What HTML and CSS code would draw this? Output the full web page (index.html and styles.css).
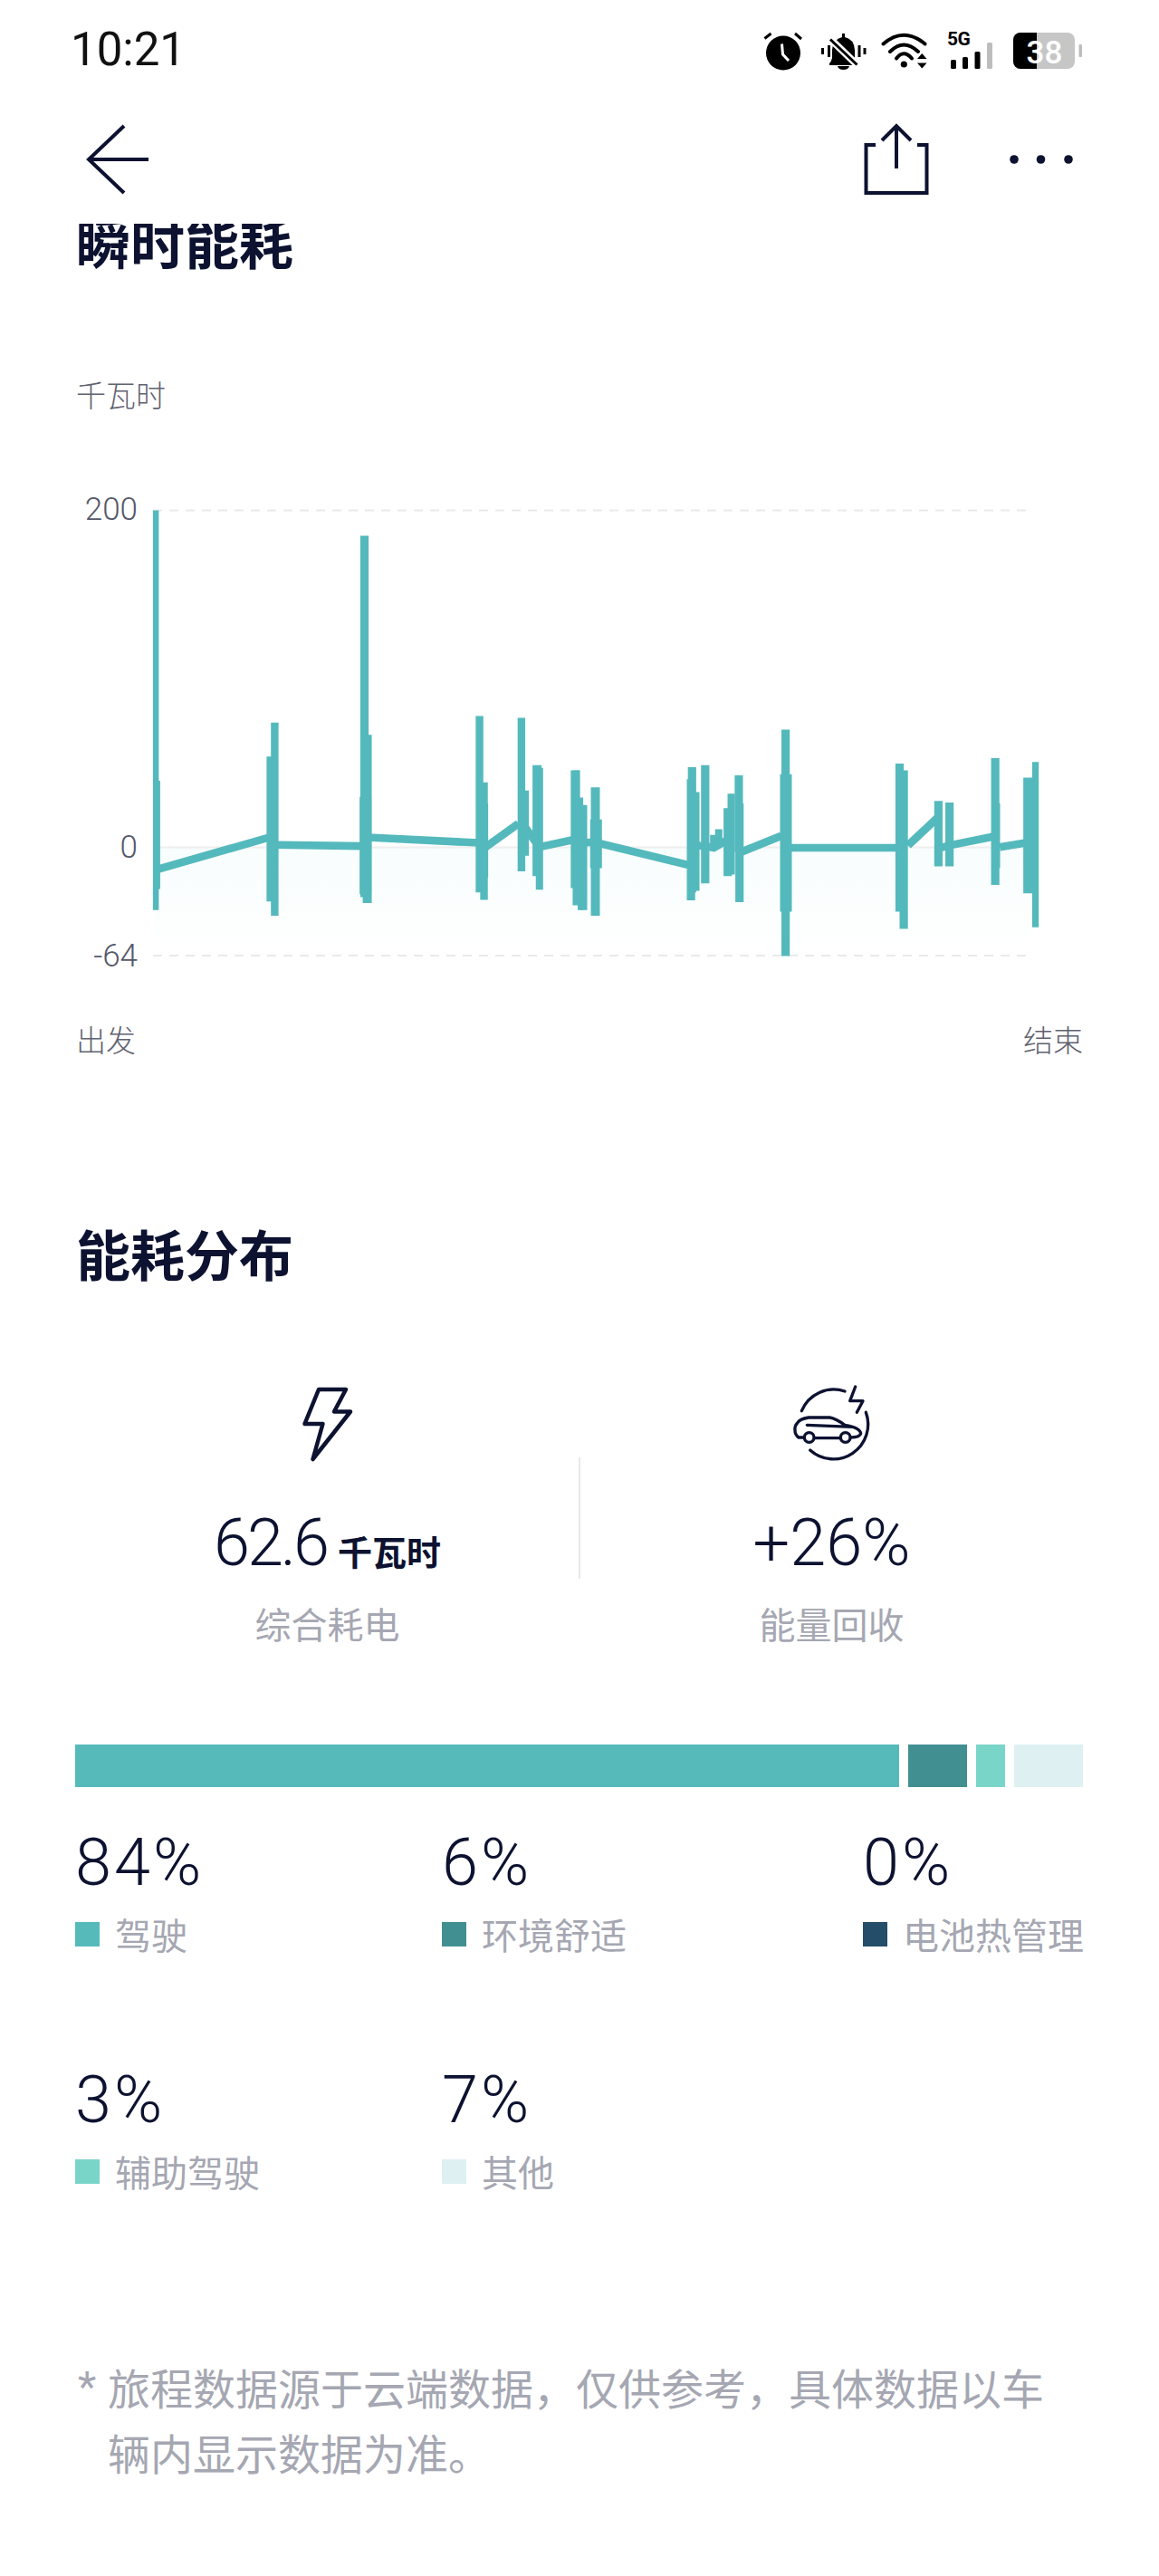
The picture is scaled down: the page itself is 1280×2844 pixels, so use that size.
FILE: index.html
```html
<!DOCTYPE html>
<html lang="zh-CN">
<head>
<meta charset="utf-8">
<title>瞬时能耗</title>
<link rel="stylesheet" href="styles.css">
</head>
<body>
<div class="page">
  <header class="top">
    <div class="status">
      <span class="clock">10:21</span>
      <div class="status-icons">
        <svg class="si" width="60" height="60" viewBox="840 25 60 60">
          <circle class="ink" cx="865" cy="58.5" r="19"/>
          <path class="s-ink" d="M844.5 42.5L851.5 37M878 37L885 43"/>
          <path class="s-white" d="M863.5 48.5L864.5 60L871 67"/>
        </svg>
        <svg class="si" width="65" height="60" viewBox="900 25 65 60">
          <path class="ink" d="M930 37h3v4q10 2 11 14v9q1 4 3 6v2h-31v-2q2-2 3-6v-9q1-12 11-14z"/>
          <path class="ink" d="M925 73h13q-1 4-6.500 4t-6.500-4z"/>
          <path class="s-white-w" d="M916 42L948 73"/>
          <path class="s-ink" d="M917 43.500L946.500 71.500"/>
          <path class="s-ink" d="M908.500 53V60M915.500 50V63M949 50V63M955 53V60"/>
        </svg>
        <svg class="si" width="70" height="60" viewBox="965 25 70 60">
          <path class="s-wifi" d="M975.500 48.500Q998 29 1021.500 48.500M983 57Q998 42 1014 57M990 64.500Q998 54 1007 64.500"/>
          <circle class="ink" cx="998.300" cy="71" r="3.600"/>
          <path class="ink" d="M1018.300 59L1023.500 65H1013zM1013 69.500H1023.500L1018.300 75.500z"/>
        </svg>
        <svg class="si" width="75" height="60" viewBox="1035 25 75 60">
          <text class="fiveg" x="1046" y="50">5G</text>
          <rect class="ink" x="1050" y="66" width="6" height="10" rx="1.500"/>
          <rect class="ink" x="1063" y="63" width="6" height="13" rx="1.500"/>
          <rect class="ink" x="1076.500" y="57" width="6" height="19" rx="1.500"/>
          <rect class="sig-off" x="1090" y="47" width="6" height="29" rx="1.500"/>
        </svg>
        <svg class="si" width="90" height="60" viewBox="1110 25 90 60">
          <rect class="bat-off" x="1119" y="36" width="68" height="40" rx="8"/>
          <path class="ink" d="M1145 36H1127a8 8 0 0 0-8 8V68a8 8 0 0 0 8 8H1145z"/>
          <rect class="sig-off" x="1191.500" y="49" width="3.500" height="14" rx="1"/>
          <text class="batnum" x="1153.500" y="70">38</text>
        </svg>
      </div>
    </div>
    <nav class="nav">
      <svg class="nav-back" width="90" height="90" viewBox="85 131 90 90">
        <path class="s-nav" d="M137 139L98 176L137 213M98 176H164"/>
      </svg>
      <div class="nav-right">
        <svg class="nav-share" width="90" height="90" viewBox="945 131 90 90">
          <path class="s-nav" d="M967 160H956.500V213H1023.500V160H1013M990 186V140M974 155L990 139L1006 155"/>
        </svg>
        <svg class="nav-more" width="90" height="90" viewBox="1105 131 90 90">
          <circle class="ink-nav" cx="1120" cy="176" r="4.800"/>
          <circle class="ink-nav" cx="1149.500" cy="176" r="4.800"/>
          <circle class="ink-nav" cx="1180" cy="176" r="4.800"/>
        </svg>
      </div>
    </nav>
  </header>

  <h1 class="title title-first">瞬时能耗</h1>
  <div class="unit">千瓦时</div>

  <svg class="chart" width="1280" height="610" viewBox="0 500 1280 610">
    <defs>
      <linearGradient id="areaFade" x1="0" y1="0" x2="0" y2="1">
        <stop offset="0" stop-color="#f8fdfd"/>
        <stop offset="1" stop-color="#ffffff"/>
      </linearGradient>
    </defs>
    <rect x="170" y="936" width="968" height="119" fill="url(#areaFade)"/>
    <path class="grid" d="M169 563.500H1138M169 1055H1138"/>
    <path class="zero" d="M169 935.500H1138"/>
    <text class="axis" x="152" y="574">200</text>
    <text class="axis" x="152" y="947">0</text>
    <text class="axis" x="152" y="1067">-64</text>
    <g transform="translate(60 530) scale(.3827 .357)">
      <path class="ln" d="M295 1205L620 1105M640 1128L890 1132M905 1105L1225 1122M1245 1135L1340 1062M1350 1062L1400 1135M1400 1135L1530 1105"/>
      <path class="w8" d="M300 930V1265M291 1010V1265"/>
      <path class="w13" d="M293 94V1330"/>
      <path class="w14" d="M622 855V1303M1360 960V1162"/>
      <path class="w17" d="M636 750V1347M1227 730V1275M1240 935V1298M1348 735V1210"/>
      <path class="w18" d="M895 172V1290"/>
      <path class="w20" d="M628 1000V1250M903 788V1308M1393 882V1225"/>
      <path class="w16" d="M1400 890V1267"/>
      <path class="w26" d="M898 980V1280M1235 1000V1230"/>
    </g>
    <g transform="translate(620 530) scale(.3827 .357)">
      <path class="ln" d="M60 1122L98 1120M105 1122L365 1190M395 1130L430 1135L440 1137L475 1115M520 1150L635 1100M660 1137L970 1137M1000 1130L1085 1045M1095 1137L1120 1130L1245 1103M1265 1135L1340 1122"/>
      <path class="w12" d="M55 982V1330M437 1097V1140M1258 1000V1200"/>
      <path class="w14" d="M1368 872V1383"/>
      <path class="w16" d="M43 898V1315M64 1005V1330M388 965V1270M454 1080V1130M490 970V1220"/>
      <path class="w18" d="M377 888V1275M374 925V1300M415 882V1247M480 1015V1225M512 913V1150M514 1000V1305M647 772V1472M976 877V1335M988 898V1388M1088 992V1195M1120 997V1195M1252 860V1252"/>
      <path class="w20" d="M40 898V1262M98 950V1347"/>
      <path class="w26" d="M100 1050V1200M648 910V1335M1350 920V1278"/>
    </g>
  </svg>

  <div class="axis-x"><span>出发</span><span>结束</span></div>

  <h2 class="title title-second">能耗分布</h2>

  <section class="stats">
    <div class="stat">
      <svg class="stat-icon" width="110" height="110" viewBox="306 1515 110 110">
        <path class="s-icon" d="M351 1533H381L368 1557.500H386L344.500 1610L355.500 1571H335.500z"/>
      </svg>
      <div class="value value-num">62.6<small class="value-unit">千瓦时</small></div>
      <div class="stat-label">综合耗电</div>
    </div>
    <div class="divider"></div>
    <div class="stat">
      <svg class="stat-icon" width="110" height="110" viewBox="8 0 330 330">
        <path class="s-car" d="M72 125A115 115 0 0 1 215 60M285 130A115 115 0 0 1 100 255M250 45L232 92H275L255 130"/>
        <path class="s-car" d="M80 213H62Q50 205 50 190Q48 175 58 165Q65 152 95 147H165Q185 150 215 172Q265 180 268 200Q265 213 235 213M115 215H200M90 172L240 178"/>
        <circle class="s-car" cx="97" cy="213" r="16"/>
        <circle class="s-car" cx="217" cy="213" r="16"/>
      </svg>
      <div class="value">+26%</div>
      <div class="stat-label">能量回收</div>
    </div>
  </section>

  <div class="bar">
    <span class="seg seg-drive"></span>
    <span class="seg seg-env"></span>
    <span class="seg seg-assist"></span>
    <span class="seg seg-other"></span>
  </div>

  <section class="legend">
    <div class="item">
      <div class="pct">84%</div>
      <div class="key"><i class="sw c-drive"></i>驾驶</div>
    </div>
    <div class="item">
      <div class="pct">6%</div>
      <div class="key"><i class="sw c-env"></i>环境舒适</div>
    </div>
    <div class="item">
      <div class="pct">0%</div>
      <div class="key"><i class="sw c-bat"></i>电池热管理</div>
    </div>
    <div class="item">
      <div class="pct">3%</div>
      <div class="key"><i class="sw c-assist"></i>辅助驾驶</div>
    </div>
    <div class="item">
      <div class="pct">7%</div>
      <div class="key"><i class="sw c-other"></i>其他</div>
    </div>
  </section>

  <footer class="note">
    <span class="star">*</span>
    <p class="note-text">旅程数据源于云端数据，仅供参考，具体数据以车辆内显示数据为准。</p>
  </footer>
</div>
</body>
</html>
```
FILE: styles.css
```css
* { box-sizing: border-box; }
html, body { margin: 0; padding: 0; background: #fff; }
.page {
  width: 1280px;
  height: 2844px;
  overflow: hidden;
  font-family: "Noto Sans CJK SC", "Noto Sans", sans-serif;
  color: #0c1230;
}
svg { display: block; }

/* header */
.top { position: relative; z-index: 1; height: 247px; background: #fff; }
.status { display: flex; justify-content: space-between; height: 85px; padding: 25px 80px 0 78px; }
.clock { font: 400 51px/60px Roboto, sans-serif; color: #111; letter-spacing: 0; }
.status-icons { display: flex; }
.ink { fill: #000; }
.s-ink { fill: none; stroke: #000; stroke-width: 3; stroke-linecap: butt; }
.s-white { fill: none; stroke: #fff; stroke-width: 3; }
.s-white-w { fill: none; stroke: #fff; stroke-width: 8; }
.s-wifi { fill: none; stroke: #000; stroke-width: 4; stroke-linecap: round; }
.fiveg { font: 700 21px Roboto, sans-serif; fill: #000; letter-spacing: -.5px; }
.sig-off { fill: #bdbdbd; }
.bat-off { fill: #c6c6c6; }
.batnum { font: 500 35px Roboto, sans-serif; fill: #fff; text-anchor: middle; }
.nav { display: flex; justify-content: space-between; padding: 46px 85px 0 85px; }
.nav-right { display: flex; gap: 70px; }
.s-nav { fill: none; stroke: #0c1230; stroke-width: 4; }
.ink-nav { fill: #0c1230; }

/* titles */
.title { margin: 0; font-size: 60px; line-height: 80px; font-weight: 700; padding-left: 84px; color: #0c1230; }
.title-first { margin-top: -21px; }
.title-second { margin-top: 176px; }

/* chart */
.unit { margin-top: 109px; padding-left: 84px; font-size: 33px; line-height: 40px; font-weight: 300; color: #5f6270; }
.chart { margin-top: 45px; }
.grid { fill: none; stroke: #e9eaec; stroke-width: 2; stroke-dasharray: 10 8; }
.zero { fill: none; stroke: #f0eeee; stroke-width: 2; }
.axis { font: 300 35px Roboto, sans-serif; fill: #55586a; text-anchor: end; }
.ln, .w8, .w12, .w13, .w14, .w16, .w17, .w18, .w20, .w26 { fill: none; stroke: #54b9bc; }
.ln { stroke-width: 24; }
.w8 { stroke-width: 11; }
.w12 { stroke-width: 16; }
.w13 { stroke-width: 17; }
.w14 { stroke-width: 19; }
.w16 { stroke-width: 21; }
.w17 { stroke-width: 22; }
.w18 { stroke-width: 24; }
.w20 { stroke-width: 26; }
.w26 { stroke-width: 34; }
.axis-x { display: flex; justify-content: space-between; margin-top: 17px; padding: 0 84px; font-size: 33px; line-height: 40px; font-weight: 300; color: #5f6270; }

/* stats */
.stats { display: grid; grid-template-columns: 1fr 2px 1fr; margin-top: 93px; padding: 0 84px; }
.stat { display: flex; flex-direction: column; align-items: center; }
.s-icon { fill: none; stroke: #0c1230; stroke-width: 4.500; stroke-linejoin: round; }
.s-car { fill: none; stroke: #0c1230; stroke-width: 10; stroke-linecap: round; stroke-linejoin: round; }
.divider { align-self: start; margin-top: 93px; height: 134px; background: #e8e9ec; }
.value { margin-top: 35px; font: 300 72px/85px Roboto, sans-serif; color: #0c1230; white-space: nowrap; }
.value-num { letter-spacing: -3px; }
.value-unit { margin-left: 12px; font: 700 38px "Noto Sans CJK SC", sans-serif; letter-spacing: 0; }
.stat-label { margin-top: 21px; font-size: 40px; line-height: 50px; color: #a5a7b2; }

/* share bar */
.bar { display: flex; gap: 10px; height: 47px; margin: 109px 84px 0 83px; }
.seg { display: block; }
.seg-drive { flex: 910; background: #57baba; }
.seg-env { flex: 65; background: #428f91; }
.seg-assist { flex: 32; background: #7ad5c9; }
.seg-other { flex: 76; background: #def0f2; }

/* legend */
.legend { display: grid; grid-template-columns: 405px 465px auto; row-gap: 118px; margin-top: 49px; padding-left: 83px; }
.item { height: 144px; }
.pct { font: 300 72px/70px Roboto, sans-serif; letter-spacing: 3px; color: #0c1230; }
.key { display: flex; align-items: center; gap: 17px; margin-top: 18px; font-size: 40px; line-height: 50px; color: #a5a7b2; white-space: nowrap; }
.sw { display: block; width: 27px; height: 27px; flex: none; }
.c-drive { background: #57baba; }
.c-env { background: #428f91; }
.c-bat { background: #234d68; }
.c-assist { background: #7ad5c9; }
.c-other { background: #def0f2; }

/* footnote */
.note { display: flex; margin-top: 171px; padding: 0 84px; font-size: 47px; line-height: 72px; color: #a5a7b2; }
.star { flex: none; width: 35px; padding-left: 2px; font-family: Roboto, sans-serif; }
.note-text { margin: 0; }
```
